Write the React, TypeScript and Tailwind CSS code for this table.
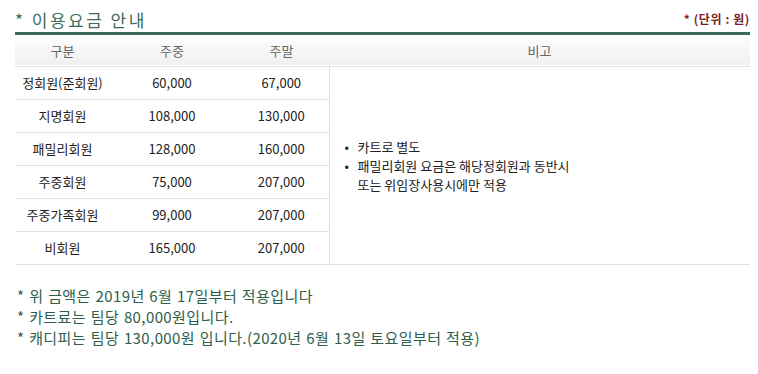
const rows = [
  { name: "정회원(준회원)", weekday: "60,000", weekend: "67,000" },
  { name: "지명회원", weekday: "108,000", weekend: "130,000" },
  { name: "패밀리회원", weekday: "128,000", weekend: "160,000" },
  { name: "주중회원", weekday: "75,000", weekend: "207,000" },
  { name: "주중가족회원", weekday: "99,000", weekend: "207,000" },
  { name: "비회원", weekday: "165,000", weekend: "207,000" },
];

const notes = [
  "* 위 금액은 2019년 6월 17일부터 적용입니다",
  "* 카트료는 팀당 80,000원입니다.",
  "* 캐디피는 팀당 130,000원 입니다.(2020년 6월 13일 토요일부터 적용)",
];

export default function App() {
  return (
    <div
      className="w-[758px] h-[374px] bg-white overflow-hidden"
      style={{ fontFamily: '"Noto Sans CJK KR", "Noto Sans", sans-serif' }}
    >
      <div className="ml-[15px] mr-[8px] pt-[5px]">
        {/* title */}
        <div className="flex items-end justify-between h-[27px]">
          <h2 className="text-[17px] leading-[24px] text-[#3d6b5b] tracking-[2.5px]">* 이용요금 안내</h2>
          <span className="text-[12px] leading-[20px] font-bold text-[#7a1f1f] pb-[3px] tracking-[0.6px]">* (단위 : 원)</span>
        </div>

        <div className="h-[3px] bg-[#3d6b5b]" />

        {/* table */}
        <table className="w-full border-collapse table-fixed">
          <colgroup>
            <col className="w-[95px]" />
            <col className="w-[124px]" />
            <col className="w-[95px]" />
            <col />
          </colgroup>
          <thead>
            <tr className="h-[31px] bg-gradient-to-b from-[#fdfdfd] to-[#f0f0f0] border-b border-[#e2e2e2]">
              <th className="font-normal text-[13px] text-[#666]">구분</th>
              <th className="font-normal text-[13px] text-[#666]">주중</th>
              <th className="font-normal text-[13px] text-[#666]">주말</th>
              <th className="font-normal text-[13px] text-[#666]">비고</th>
            </tr>
          </thead>
          <tbody>
            {rows.map((r, i) => (
              <tr key={r.name} className="h-[33px] border-b border-[#e2e2e2]">
                <td className="text-center text-[13px] text-[#222]">{r.name}</td>
                <td className="text-center text-[13px] text-[#222]">{r.weekday}</td>
                <td className="text-center text-[13px] text-[#222]">{r.weekend}</td>
                {i === 0 && (
                  <td rowSpan={6} className="border-l border-[#e2e2e2] align-middle pl-[15px]">
                    <ul className="text-[13px] leading-[19px] text-[#222] pt-[1px]">
                      <li className="flex">
                        <span className="w-[13px]">•</span>
                        <span>카트로 별도</span>
                      </li>
                      <li className="flex">
                        <span className="w-[13px]">•</span>
                        <span>
                          패밀리회원 요금은 해당정회원과 동반시
                          <br />
                          또는 위임장사용시에만 적용
                        </span>
                      </li>
                    </ul>
                  </td>
                )}
              </tr>
            ))}
          </tbody>
        </table>

        {/* footnotes */}
        <div className="mt-[20px] pl-[2px] flex flex-col">
          {notes.map((n) => (
            <p key={n} className="text-[15px] leading-[21px] text-[#2e5e4c] tracking-[0.4px] [word-spacing:1px]">
              {n}
            </p>
          ))}
        </div>
      </div>
    </div>
  );
}
